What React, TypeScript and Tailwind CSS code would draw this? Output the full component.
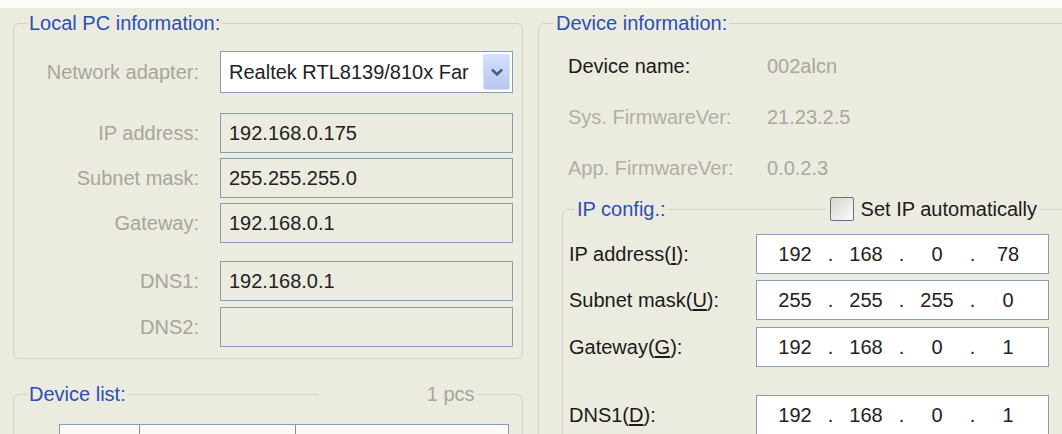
import type { ReactNode } from 'react';

// XP-style group box line colour and text field border
const groupLine = 'bg-[#d2d1c4]';

function InfoField({ label, value, blank }: { label: string; value?: string; blank?: boolean }) {
  return (
    <div className="flex items-center">
      <div className="w-[185px] text-right text-[#a7a69b]">{label}</div>
      <div className="ml-[21px] flex h-[40px] w-[293px] items-center border border-[#879db3] bg-[#ecebdf] pl-[8px] text-[#222]">
        {blank ? '' : value}
      </div>
    </div>
  );
}

function IpBox({ parts }: { parts: string[] }) {
  return (
    <div className="flex h-[40px] w-[293px] items-center border border-[#879db3] bg-white pl-[11px] text-[#222]">
      {parts.map((p, i) => (
        <div key={i} className="flex items-center">
          {i > 0 && <span className="w-[17px] text-center">.</span>}
          <span className="w-[54px] text-center">{p}</span>
        </div>
      ))}
    </div>
  );
}

function IpRow({ label, parts }: { label: ReactNode; parts: string[] }) {
  return (
    <div className="flex items-center">
      <div className="w-[187px] text-[#1a1a1a]">{label}</div>
      <IpBox parts={parts} />
    </div>
  );
}

export default function App() {
  return (
    <div className="h-[434px] w-[1062px] overflow-hidden bg-[#ecebdf] font-['Liberation_Sans',Arial,sans-serif] text-[20px] leading-[22px]">
      <div className="h-[8px] bg-[#fbfbf8]" />
      <div className="flex items-start pl-[13px] pt-[4px]">
        {/* left column */}
        <div className="flex w-[510px] shrink-0 flex-col">
          <fieldset className="rounded-[6px] border border-[#d2d1c4] pb-[11px]">
            <legend className="ml-[13px] px-[2px] text-[#2a50b6]">Local PC information:</legend>

            <div className="mt-[17px] flex items-center">
              <div className="w-[185px] text-right text-[#a7a69b]">Network adapter:</div>
              <div className="ml-[21px] flex h-[42px] w-[293px] items-center border border-[#879db3] bg-white">
                <div className="flex-1 overflow-hidden whitespace-nowrap pl-[8px] text-[#222]">Realtek RTL8139/810x Far</div>
                <div className="mr-[2px] flex h-[36px] w-[27px] items-center justify-center rounded-[2px] border border-[#d6e1fb] bg-linear-to-b from-[#d3dffb] to-[#b7c9f1]">
                  <svg width="14" height="10" viewBox="0 0 14 10">
                    <path d="M2 2.5 L7 7.5 L12 2.5" fill="none" stroke="#4b5f86" strokeWidth="2.6" />
                  </svg>
                </div>
              </div>
            </div>

            <div className="mt-[20px]">
              <InfoField label="IP address:" value="192.168.0.175" />
            </div>
            <div className="mt-[5px]">
              <InfoField label="Subnet mask:" value="255.255.255.0" />
            </div>
            <div className="mt-[5px]">
              <InfoField label="Gateway:" value="192.168.0.1" />
            </div>
            <div className="mt-[18px]">
              <InfoField label="DNS1:" value="192.168.0.1" />
            </div>
            <div className="mt-[6px]">
              <InfoField label="DNS2:" blank />
            </div>
          </fieldset>

          <fieldset className="mt-[24px] h-[80px] rounded-[6px] border border-[#d2d1c4]">
            <legend className="ml-[13px] flex w-[489px] items-center">
              <span className="px-[2px] text-[#2a50b6]">Device list:</span>
              <span className={`h-px w-[191px] ${groupLine}`} />
              <span className="w-[105px]" />
              <span className="px-[3px] text-[#a7a69b]">1 pcs</span>
              <span className={`h-px flex-1 ${groupLine}`} />
            </legend>
            <div className="ml-[45px] mt-[19px] h-[60px] w-[450px] border border-[#879db3] bg-white">
              <div className="flex h-[24px] border-b border-[#d6d5cb] bg-[#f9f9f6]">
                <div className="w-[80px] border-r border-[#8f8f88]" />
                <div className="w-[156px] border-r border-[#8f8f88]" />
                <div className="flex-1" />
              </div>
            </div>
          </fieldset>
        </div>

        {/* right column */}
        <fieldset className="ml-[15px] h-[470px] w-[545px] shrink-0 rounded-[6px] border border-[#d2d1c4]">
          <legend className="ml-[15px] px-[2px] text-[#2a50b6]">Device information:</legend>

          <div className="mt-[21px] flex flex-col gap-[29px] pl-[29px]">
            <div className="flex">
              <div className="w-[199px] text-[#1a1a1a]">Device name:</div>
              <div className="text-[#a9a89e]">002alcn</div>
            </div>
            <div className="flex">
              <div className="w-[199px] text-[#b0afa5]">Sys. FirmwareVer:</div>
              <div className="text-[#a9a89e]">21.23.2.5</div>
            </div>
            <div className="flex">
              <div className="w-[199px] text-[#b0afa5]">App. FirmwareVer:</div>
              <div className="text-[#a9a89e]">0.0.2.3</div>
            </div>
          </div>

          <fieldset className="ml-[23px] mt-[18px] h-[300px] w-[515px] rounded-[6px] border border-[#d2d1c4]">
            <legend className="ml-[12px] flex h-[24px] w-[495px] items-center">
              <span className="px-[2px] text-[#2a50b6]">IP config.:</span>
              <span className={`h-px w-[158px] ${groupLine}`} />
              <span className="ml-[4px] h-[24px] w-[24px] shrink-0 rounded-[2px] border border-[#5d7590] bg-linear-to-br from-[#d8d6cc] to-[#fbfbf8]" />
              <span className="ml-[7px] pr-[3px] text-[#1a1a1a]">Set IP automatically</span>
              <span className={`h-px flex-1 ${groupLine}`} />
            </legend>

            <div className="mt-[13px] flex flex-col pl-[6px]">
              <IpRow
                label={<>IP address(<span className="underline underline-offset-2">I</span>):</>}
                parts={['192', '168', '0', '78']}
              />
              <div className="mt-[6px]">
                <IpRow
                  label={<>Subnet mask(<span className="underline underline-offset-2">U</span>):</>}
                  parts={['255', '255', '255', '0']}
                />
              </div>
              <div className="mt-[7px]">
                <IpRow
                  label={<>Gateway(<span className="underline underline-offset-2">G</span>):</>}
                  parts={['192', '168', '0', '1']}
                />
              </div>
              <div className="mt-[28px]">
                <IpRow
                  label={<>DNS1(<span className="underline underline-offset-2">D</span>):</>}
                  parts={['192', '168', '0', '1']}
                />
              </div>
            </div>
          </fieldset>
        </fieldset>
      </div>
    </div>
  );
}
